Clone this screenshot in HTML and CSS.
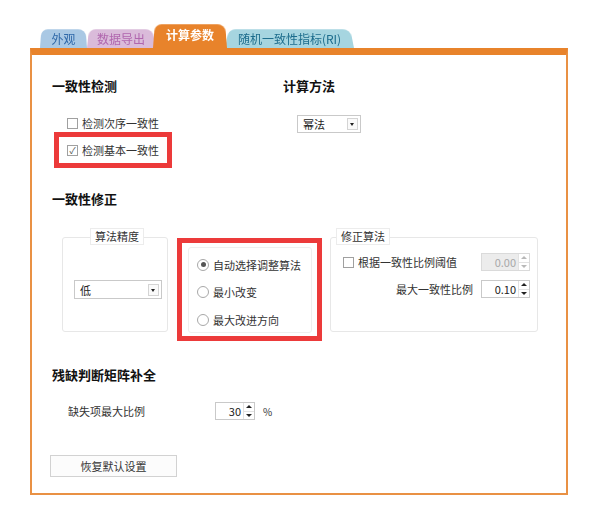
FILE: index.html
```html
<!DOCTYPE html>
<html lang="zh-CN">
<head>
  <meta charset="UTF-8" />
  <title>计算参数</title>
  <link rel="stylesheet" href="styles.css">
</head>
<body>
  <div class="tabs">
    <div class="tab tab-look">外观</div>
    <div class="tab tab-export">数据导出</div>
    <div class="tab tab-calc active">计算参数</div>
    <div class="tab tab-ri">随机一致性指标(RI)</div>
  </div>

  <div class="panel">
    <div class="top-row">
      <div class="col-check">
        <h3>一致性检测</h3>
        <div class="check-row first"><span class="checkbox"></span>检测次序一致性</div>
        <div class="highlight hl-check">
          <div class="check-row"><span class="checkbox checked">✓</span>检测基本一致性</div>
        </div>
      </div>
      <div class="col-method">
        <h3>计算方法</h3>
        <div class="select select-method"><span>幂法</span><span class="select-btn"></span></div>
      </div>
    </div>

    <h3 class="sec-fix">一致性修正</h3>
    <div class="fix-row">
      <div class="group group-precision">
        <div class="group-title">算法精度</div>
        <div class="select select-precision"><span>低</span><span class="select-btn"></span></div>
      </div>

      <div class="highlight hl-radio">
        <div class="group group-radio">
          <div class="radio-row"><span class="radio on"></span>自动选择调整算法</div>
          <div class="radio-row"><span class="radio"></span>最小改变</div>
          <div class="radio-row"><span class="radio"></span>最大改进方向</div>
        </div>
      </div>

      <div class="group group-algo">
        <div class="group-title">修正算法</div>
        <div class="algo-row">
          <span class="checkbox"></span>
          <span class="algo-label">根据一致性比例阈值</span>
          <div class="spin disabled"><span class="spin-val">0.00</span><span class="spin-btns"><i class="up"></i><i class="down"></i></span></div>
        </div>
        <div class="algo-row end">
          <span class="algo-max">最大一致性比例</span>
          <div class="spin"><span class="spin-val">0.10</span><span class="spin-btns"><i class="up"></i><i class="down"></i></span></div>
        </div>
      </div>
    </div>

    <h3 class="sec-fill">残缺判断矩阵补全</h3>
    <div class="fill-row">
      <span class="fill-label">缺失项最大比例</span>
      <div class="spin spin-pct"><span class="spin-val">30</span><span class="spin-btns"><i class="up"></i><i class="down"></i></span></div>
      <span class="pct">%</span>
    </div>

    <button type="button" class="reset-btn">恢复默认设置</button>
  </div>
</body>
</html>
```

FILE: styles.css
```css
body {
  margin: 0;
  background: #fff;
  font-family: "Noto Sans CJK SC", "Microsoft YaHei", sans-serif;
  font-size: 11px;
  color: #333;
}

/* tab strip */
.tabs {
  display: flex;
  align-items: flex-end;
  height: 25px;
  margin-top: 23px;
  padding-left: 40px;
}
.tab {
  position: relative;
  z-index: 1;
  height: 20px;
  line-height: 21px;
  text-align: center;
  font-size: 12px;
}
.tab::before {
  content: "";
  position: absolute;
  top: 0;
  left: 0;
  right: 0;
  bottom: 0;
  z-index: -1;
  border-radius: 7px 8px 0 0;
  transform: perspective(40px) rotateX(7deg);
  transform-origin: bottom;
}
.tab-look { width: 47px; color: #2f68a8; }
.tab-look::before { background: #a9c8e4; }
.tab-export { width: 68px; color: #b066ae; }
.tab-export::before { background: #dabbda; }
.tab-calc {
  width: 74px;
  margin: 0 -2px;
  height: 25px;
  line-height: 23px;
  color: #fff;
  font-weight: bold;
  z-index: 2;
}
.tab-calc::before { background: #e8832b; transform: perspective(50px) rotateX(6deg); }
.tab-ri { width: 129px; color: #1c6c8c; }
.tab-ri::before { background: #a6d5e0; }

/* main panel */
.panel {
  box-sizing: border-box;
  width: 538px;
  margin-left: 30px;
  border: 2px solid #e99144;
  border-top: 7px solid #e8832b;
  padding: 21px 0 16px 20px;
}
h3 {
  margin: 0;
  font-size: 13px;
  line-height: 20px;
  font-weight: bold;
  color: #111;
}

.top-row {
  display: flex;
}
.col-check {
  width: 231px;
}
.check-row {
  display: flex;
  align-items: center;
  height: 26px;
  padding-left: 8px;
}
.check-row.first {
  height: 18px;
  margin-top: 18px;
  padding-left: 15px;
}
.checkbox {
  box-sizing: border-box;
  width: 11px;
  height: 11px;
  margin-right: 4px;
  border: 1px solid #a0a0a0;
  background: #fff;
  font-size: 9px;
  line-height: 9px;
  text-align: center;
  color: #555;
  flex-shrink: 0;
}

.highlight {
  box-sizing: border-box;
  border: 5px solid #ec3a3a;
}
.hl-check {
  width: 118px;
  height: 36px;
  margin-left: 2px;
}

.col-method h3 {
  margin-left: 0;
}
.select {
  box-sizing: border-box;
  display: flex;
  align-items: center;
  justify-content: space-between;
  border: 1px solid #c9c9c9;
  background: #fff;
  padding: 0 2px 0 5px;
  color: #222;
}
.select-method {
  width: 64px;
  height: 18px;
  margin: 19px 0 0 14px;
}
.select-btn {
  position: relative;
  box-sizing: border-box;
  width: 11px;
  height: 12px;
  border: 1px solid #d4d4d4;
  background: #fafafa;
}
.select-btn::after {
  content: "";
  position: absolute;
  left: 2px;
  top: 4px;
  border-left: 2.5px solid transparent;
  border-right: 2.5px solid transparent;
  border-top: 3px solid #222;
}

.sec-fix {
  margin-top: 21px;
}

.fix-row {
  display: flex;
  align-items: flex-start;
  margin-top: 19px;
}
.group {
  position: relative;
  box-sizing: border-box;
  border: 1px solid #e7e7e7;
  border-radius: 3px;
  background: #fff;
}
.group-title {
  position: absolute;
  top: -10px;
  height: 17px;
  box-sizing: border-box;
  padding: 0 4px;
  border: 1px solid #ececec;
  background: #fff;
  line-height: 15px;
  color: #333;
}
.group-precision {
  width: 106px;
  height: 95px;
  margin: 9px 0 0 10px;
  padding: 42px 0 0 11px;
}
.group-precision .group-title {
  left: 27px;
}
.select-precision {
  width: 88px;
  height: 19px;
}

.hl-radio {
  width: 145px;
  height: 103px;
  margin: 10px 0 0 9px;
  padding: 4px 5px 3px 6px;
}
.group-radio {
  height: 86px;
  padding: 3px 0 0 8px;
  border-color: #efefef;
}
.radio-row {
  display: flex;
  align-items: center;
  height: 27.5px;
}
.radio {
  box-sizing: border-box;
  position: relative;
  width: 12px;
  height: 12px;
  margin-right: 4px;
  border: 1px solid #a8a8a8;
  border-radius: 50%;
  background: #fff;
}
.radio.on::after {
  content: "";
  position: absolute;
  left: 2.5px;
  top: 2.5px;
  width: 5px;
  height: 5px;
  border-radius: 50%;
  background: #555;
}

.group-algo {
  width: 208px;
  height: 95px;
  margin: 9px 0 0 8px;
  padding: 15px 7px 0 12px;
}
.group-algo .group-title {
  left: 5px;
}
.algo-row {
  display: flex;
  align-items: center;
  height: 18px;
}
.algo-row + .algo-row {
  margin-top: 9px;
}
.algo-label {
  flex: 1;
}
.algo-row.end {
  justify-content: flex-end;
}
.algo-max {
  margin-right: 8px;
}

/* spin boxes */
.spin {
  box-sizing: border-box;
  display: flex;
  width: 49px;
  height: 18px;
  border: 1px solid #c9c9c9;
  background: #fff;
  color: #222;
}
.spin-val {
  flex: 1;
  text-align: right;
  padding-right: 2px;
  line-height: 16px;
}
.spin-btns {
  display: flex;
  flex-direction: column;
  width: 10px;
  border-left: 1px solid #e2e2e2;
}
.spin-btns i {
  position: relative;
  flex: 1;
}
.spin-btns i + i {
  border-top: 1px solid #e2e2e2;
}
.spin-btns i::after {
  content: "";
  position: absolute;
  left: 2px;
  border-left: 3px solid transparent;
  border-right: 3px solid transparent;
}
.spin-btns .up::after {
  top: 2px;
  border-bottom: 3px solid #222;
}
.spin-btns .down::after {
  top: 2px;
  border-top: 3px solid #222;
}
.spin.disabled {
  background: #ececec;
  border-color: #dadada;
  color: #a8a8a8;
}
.spin.disabled .spin-btns {
  background: #fff;
}
.spin.disabled .spin-btns .up::after { border-bottom-color: #b8b8b8; }
.spin.disabled .spin-btns .down::after { border-top-color: #b8b8b8; }

.sec-fill {
  margin-top: 24px;
}
.fill-row {
  display: flex;
  align-items: center;
  height: 18px;
  margin-top: 17px;
}
.fill-label {
  width: 147px;
  margin-left: 16px;
}
.spin-pct {
  width: 40px;
}
.pct {
  margin-left: 8px;
  font-size: 10px;
}

.reset-btn {
  display: block;
  width: 127px;
  height: 22px;
  margin: 35px 0 0 -2px;
  padding: 0;
  border: 1px solid #d2d2d2;
  background: #fcfcfc;
  font-family: inherit;
  font-size: 11px;
  color: #333;
}
```
